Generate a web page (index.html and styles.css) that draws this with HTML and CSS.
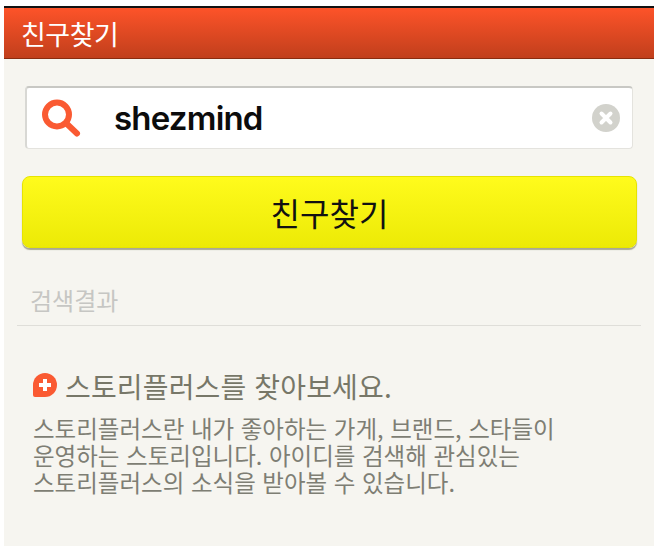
FILE: index.html
```html
<!DOCTYPE html>
<html lang="ko">

<head>
  <meta charset="UTF-8">
  <title>친구찾기</title>
  <link rel="stylesheet" href="styles.css">
</head>

<body>
  <div class="screen">
    <header class="top-bar">친구찾기</header>

    <div class="search-box">
      <svg class="search-icon" width="40" height="38" viewBox="0 0 40 38">
        <circle cx="16" cy="15.5" r="12" fill="none" stroke="#fa5a32" stroke-width="6" />
        <path d="M26 25 L36 34.5" fill="none" stroke="#fa5a32" stroke-width="6" stroke-linecap="round" />
      </svg>
      <span class="search-text">shezmind</span>
      <svg class="clear-icon" width="28" height="28" viewBox="0 0 28 28">
        <circle cx="14" cy="14" r="14" fill="#d2d2cc" />
        <path d="M9.5 9.5 L18.5 18.5 M18.5 9.5 L9.5 18.5" stroke="#fff" stroke-width="4" stroke-linecap="round" />
      </svg>
    </div>

    <button type="button" class="find-btn">친구찾기</button>

    <div class="result-label">검색결과</div>

    <section class="info">
      <h2>
        <svg class="plus-icon" width="26" height="26" viewBox="1 1 26 26">
          <path d="M13 1 A12 12 0 0 1 13 25 H3 Q1 25 1 23 V13 A12 12 0 0 1 13 1 Z" fill="#fa5a32" />
          <path d="M13 7 V19 M7 13 H19" stroke="#fff" stroke-width="4" />
        </svg>
        스토리플러스를 찾아보세요.
      </h2>
      <p>스토리플러스란 내가 좋아하는 가게, 브랜드, 스타들이<br>운영하는 스토리입니다. 아이디를 검색해 관심있는<br>스토리플러스의 소식을 받아볼 수 있습니다.</p>
    </section>
  </div>
</body>

</html>
```

FILE: styles.css
```css
body {
  margin: 0;
  background-color: #ffffff;
  font-family: "Noto Sans CJK KR", "Noto Sans", sans-serif;
}

.screen {
  margin: 6px 6px 0 4px;
  height: 540px;
  box-sizing: border-box;
  background-color: #f6f5f0;
  border-top: 2px solid #111;
  overflow: hidden;
}

.top-bar {
  height: 51px;
  box-sizing: border-box;
  padding-left: 17px;
  background: linear-gradient(#fd5329, #c13f1c);
  border-bottom: 1px solid #8a2c10;
  color: #fff;
  font-size: 27px;
  line-height: 52px;
  letter-spacing: -0.5px;
}

.search-box {
  display: flex;
  align-items: center;
  height: 63px;
  box-sizing: border-box;
  margin: 27px 21px 0 21px;
  padding: 0 12px 0 14px;
  background-color: #fff;
  border: 1px solid #e4e3de;
  border-top: 2px solid #c8c8c4;
  border-left: 2px solid #d8d8d4;
  border-radius: 4px;
}

.search-text {
  flex: 1;
  margin-left: 33px;
  font-family: "Inter", "Noto Sans", sans-serif;
  font-size: 33px;
  font-weight: 600;
  letter-spacing: -0.8px;
  color: #0c0c0c;
}

.find-btn {
  display: block;
  width: 615px;
  height: 72px;
  margin: 27px 0 0 18px;
  padding: 0;
  background: linear-gradient(#fffb1c, #ecea06);
  border: 1px solid #e6e400;
  border-radius: 8px;
  box-shadow: 0 2px 1px #a9a994;
  color: #111;
  font-family: inherit;
  font-size: 32px;
}

.result-label {
  margin: 0 13px;
  padding: 34px 0 7px 13px;
  border-bottom: 1px solid #dfded9;
  color: #c6c6c3;
  font-size: 24px;
  line-height: 36px;
}

.info {
  padding: 42px 29px 0;
  color: #777768;
}

.info h2 {
  display: flex;
  align-items: center;
  gap: 6px;
  margin: 0;
  font-size: 28px;
  font-weight: 400;
  line-height: 36px;
  letter-spacing: 0.15px;
}

.info p {
  margin: 11px 0 0;
  font-size: 23.5px;
  line-height: 27px;
  color: #7e7e74;
}
```
